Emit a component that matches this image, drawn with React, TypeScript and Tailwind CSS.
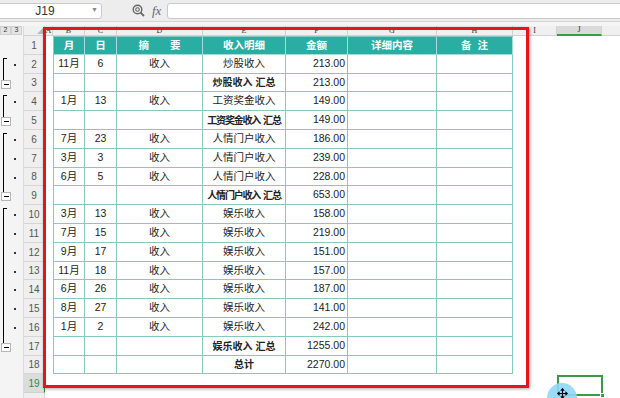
import { Move } from "lucide-react";

type Outline = "first" | "detail" | "minus" | "none";

type Row = {
  m?: string;
  d?: string;
  s?: string;
  e?: string;
  amt?: string;
  bold?: boolean;
  tight?: boolean;
  outline: Outline;
};

const rows: Row[] = [
  { m: "11月", d: "6", s: "收入", e: "炒股收入", amt: "213.00", outline: "first" },
  { e: "炒股收入 汇总", amt: "213.00", bold: true, outline: "minus" },
  { m: "1月", d: "13", s: "收入", e: "工资奖金收入", amt: "149.00", outline: "first" },
  { e: "工资奖金收入 汇总", amt: "149.00", bold: true, tight: true, outline: "minus" },
  { m: "7月", d: "23", s: "收入", e: "人情门户收入", amt: "186.00", outline: "first" },
  { m: "3月", d: "3", s: "收入", e: "人情门户收入", amt: "239.00", outline: "detail" },
  { m: "6月", d: "5", s: "收入", e: "人情门户收入", amt: "228.00", outline: "detail" },
  { e: "人情门户收入 汇总", amt: "653.00", bold: true, tight: true, outline: "minus" },
  { m: "3月", d: "13", s: "收入", e: "娱乐收入", amt: "158.00", outline: "first" },
  { m: "7月", d: "15", s: "收入", e: "娱乐收入", amt: "219.00", outline: "detail" },
  { m: "9月", d: "17", s: "收入", e: "娱乐收入", amt: "151.00", outline: "detail" },
  { m: "11月", d: "18", s: "收入", e: "娱乐收入", amt: "157.00", outline: "detail" },
  { m: "6月", d: "26", s: "收入", e: "娱乐收入", amt: "187.00", outline: "detail" },
  { m: "8月", d: "27", s: "收入", e: "娱乐收入", amt: "141.00", outline: "detail" },
  { m: "1月", d: "2", s: "收入", e: "娱乐收入", amt: "242.00", outline: "detail" },
  { e: "娱乐收入 汇总", amt: "1255.00", bold: true, outline: "minus" },
  { e: "总计", amt: "2270.00", bold: true, outline: "none" },
];

const cell = "border-r border-b border-[#86c9c0] flex items-center justify-center whitespace-nowrap";

function OutlineCell({ kind }: { kind: Outline }) {
  return (
    <div className="relative w-[24px] h-full bg-[#f4f4f4] border-r border-[#dadada]">
      {(kind === "first" || kind === "detail") && (
        <>
          <div className={`absolute left-[3px] bottom-0 w-px bg-black ${kind === "first" ? "top-[3px]" : "top-0"}`}></div>
          {kind === "first" && <div className="absolute left-[3px] top-[3px] w-[4px] h-px bg-black"></div>}
          <div className="absolute left-[14px] top-[9px] w-[2px] h-[2px] bg-[#333]"></div>
        </>
      )}
      {kind === "minus" && (
        <>
          <div className="absolute left-[3px] top-0 h-[6px] w-px bg-black"></div>
          <div className="absolute left-[1px] top-[6px] w-[10px] h-[9px] border border-[#b5b5b5] bg-white flex items-center justify-center">
            <div className="w-[5px] h-px bg-black"></div>
          </div>
        </>
      )}
    </div>
  );
}

function RowHead({ n, active }: { n: number; active?: boolean }) {
  return (
    <div
      className={`w-[21px] h-full flex items-center justify-center text-[10px] border-b border-r ${
        active ? "bg-[#dcdcdc] text-[#2e8b3e] border-r-[#2e8b3e] border-b-[#d0d0d0]" : "bg-[#efefef] text-[#555] border-[#d6d6d6]"
      }`}
    >
      {n}
    </div>
  );
}

function ColHead({ w, label, active }: { w: string; label: string; active?: boolean }) {
  return (
    <div
      className={`${w} h-full flex items-center justify-center border-r border-[#d2d2d2] ${
        active ? "bg-[#dadada] border-b-2 border-b-[#3a9a48]" : "border-b"
      }`}
    >
      {label}
    </div>
  );
}

function Detail({ r }: { r: Row }) {
  if (!r.e) return null;
  if (!r.tight) return <>{r.e}</>;
  const [a, b] = r.e.split(" ");
  return (
    <>
      <span className="tracking-[-1.2px]">{a}</span>
      <span className="ml-[3px] tracking-[-1.2px]">{b}</span>
    </>
  );
}

export default function App() {
  return (
    <div className="relative w-[620px] h-[398px] overflow-hidden bg-white text-[#222] font-['Liberation_Sans','Noto_Sans_CJK_SC',sans-serif]">
      {/* Formula bar */}
      <div className="h-[22px] flex items-center bg-[#ededed] border-b border-[#d4d4d4]">
        <div className="ml-[-6px] w-[108px] h-[16px] bg-white border border-[#c9c9c9] rounded-[3px] flex items-center">
          <span className="flex-1 text-center text-[12px] text-[#333] pl-[4px]">J19</span>
          <span className="text-[7px] text-[#888] pr-[3px]">▼</span>
        </div>
        <svg width="13" height="13" viewBox="0 0 13 13" className="ml-[30px]">
          <circle cx="5.5" cy="5.5" r="4.3" fill="none" stroke="#666" strokeWidth="1.4" />
          <circle cx="5.5" cy="5.5" r="1.8" fill="none" stroke="#666" strokeWidth="1.1" />
          <path d="M8.6 8.6 L12 12" stroke="#666" strokeWidth="1.8" />
        </svg>
        <span className="ml-[7px] text-[13px] italic text-[#666] font-['Liberation_Serif',serif]">fx</span>
        <div className="ml-[6px] flex-1 h-[16px] bg-white border border-[#c9c9c9] rounded-[3px] mr-[-4px]"></div>
      </div>
      <div className="h-[4px] bg-[#f5f5f5]"></div>

      {/* Column headers */}
      <div className="flex h-[10px] text-[8px] text-[#333] bg-[#f0f0f0] font-['Liberation_Serif',serif]">
        <div className="w-[24px] h-full flex border-r border-[#dadada] bg-[#f4f4f4]">
          <div className="w-[11px] h-[9px] flex items-center justify-center bg-[#e4e4e4] border border-[#cfcfcf] text-[7px] font-['Liberation_Sans',sans-serif]">2</div>
          <div className="w-[11px] h-[9px] flex items-center justify-center bg-[#e4e4e4] border border-[#cfcfcf] text-[7px] font-['Liberation_Sans',sans-serif]">3</div>
        </div>
        <div className="w-[21px] h-full flex items-end justify-end border-r border-b border-[#d2d2d2] pr-[1px] pb-[1px]">
          <div className="w-0 h-0 border-l-[6px] border-l-transparent border-b-[6px] border-b-[#b9b9b9]"></div>
        </div>
        <ColHead w="w-[8px]" label="A" />
        <ColHead w="w-[32px]" label="B" />
        <ColHead w="w-[32px]" label="C" />
        <ColHead w="w-[86px]" label="D" />
        <ColHead w="w-[83px]" label="E" />
        <ColHead w="w-[62px]" label="F" />
        <ColHead w="w-[89px]" label="G" />
        <ColHead w="w-[76px]" label="H" />
        <ColHead w="w-[44px]" label="I" />
        <ColHead w="w-[45px]" label="J" active />
        <div className="flex-1 border-b border-[#d2d2d2]"></div>
      </div>

      {/* Row 1: table header */}
      <div className="flex h-[19px]">
        <OutlineCell kind="none" />
        <RowHead n={1} />
        <div className="w-[8px]"></div>
        <div className="flex text-[10.5px] font-bold text-white bg-[#2aaea4] border-t border-l border-[#86c9c0]">
          <div className={`${cell} w-[31px] border-[#a6dcd6]`}>月</div>
          <div className={`${cell} w-[32px] border-[#a6dcd6]`}>日</div>
          <div className={`${cell} w-[86px] border-[#a6dcd6]`}>摘　　要</div>
          <div className={`${cell} w-[83px] border-[#a6dcd6]`}>收入明细</div>
          <div className={`${cell} w-[62px] border-[#a6dcd6]`}>金额</div>
          <div className={`${cell} w-[89px] border-[#a6dcd6]`}>详细内容</div>
          <div className={`${cell} w-[76px] border-[#a6dcd6] whitespace-pre`}>备  注</div>
        </div>
      </div>

      {/* Data rows */}
      {rows.map((r, i) => {
        const n = i + 2;
        return (
          <div key={n} className={`flex ${n % 5 === 3 ? "h-[18px]" : "h-[19px]"}`}>
            <OutlineCell kind={r.outline} />
            <RowHead n={n} />
            <div className="w-[8px]"></div>
            <div className="flex text-[10.5px] border-l border-[#86c9c0]">
              <div className={`${cell} w-[31px]`}>{r.m}</div>
              <div className={`${cell} w-[32px]`}>{r.d}</div>
              <div className={`${cell} w-[86px]`}>{r.s}</div>
              <div className={`${cell} w-[83px] ${r.bold ? "font-bold text-[10px]" : ""}`}>
                <Detail r={r} />
              </div>
              <div className={`${cell} w-[62px] !justify-end pr-[2px]`}>{r.amt}</div>
              <div className={`${cell} w-[89px]`}></div>
              <div className={`${cell} w-[76px]`}></div>
            </div>
          </div>
        );
      })}

      {/* Row 19 */}
      <div className="flex h-[19px]">
        <OutlineCell kind="none" />
        <RowHead n={19} active />
        <div className="flex-1"></div>
      </div>
      <div className="flex h-[10px]">
        <OutlineCell kind="none" />
        <div className="w-[21px] bg-[#efefef] border-r border-[#d6d6d6]"></div>
      </div>

      {/* Red highlight frame */}
      <div className="absolute left-[43px] top-[27px] w-[486px] h-[361px] border-[3px] border-[#e8141b] shadow-[1px_1px_3px_rgba(0,0,0,0.35)]"></div>

      {/* Selected cell J19 */}
      <div className="absolute left-[557px] top-[375px] w-[46px] h-[21px] border-2 border-[#3a9a48]">
        <div className="absolute right-[-4px] bottom-[-4px] w-[5px] h-[5px] bg-[#3a9a48] border border-white"></div>
      </div>

      {/* Cursor highlight */}
      <div className="absolute left-[547px] top-[383px] w-[30px] h-[30px] rounded-full bg-[#8fd8f6] opacity-90"></div>
      <Move className="absolute left-[557px] top-[388px] text-black" size={11} strokeWidth={2.5} />
    </div>
  );
}
